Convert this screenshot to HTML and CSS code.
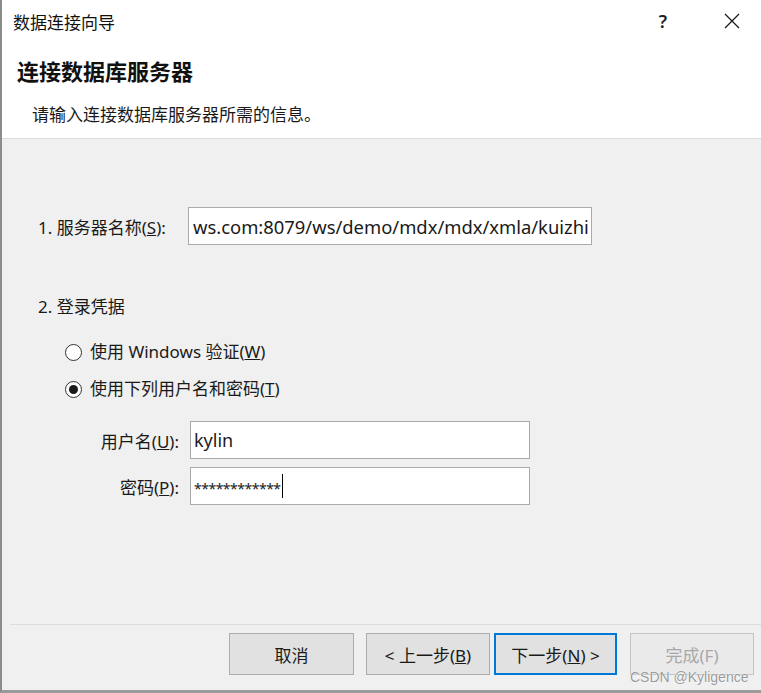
FILE: index.html
```html
<!DOCTYPE html>
<html lang="zh-CN">
<head>
<meta charset="utf-8">
<title>数据连接向导</title>
<link rel="stylesheet" href="styles.css">
</head>
<body>
<div class="window">
  <div class="top">
    <div class="titlebar">
      <span class="title">数据连接向导</span>
      <div class="controls">
        <span class="help">?</span>
        <svg class="close" width="16" height="16" viewBox="0 0 16 16"><path d="M1 1 L15 15 M15 1 L1 15" stroke="#1a1a1a" stroke-width="1.3" fill="none"/></svg>
      </div>
    </div>
    <div class="header">
      <h1 class="heading">连接数据库服务器</h1>
      <p class="sub">请输入连接数据库服务器所需的信息。</p>
    </div>
  </div>
  <div class="content">
    <div class="server-row">
      <span class="server-label">1. 服务器名称(<u>S</u>):</span>
      <div class="textbox server-box">ws.com:8079/ws/demo/mdx/mdx/xmla/kuizhi</div>
    </div>
    <div class="section-title">2. 登录凭据</div>
    <label class="radio-row first">
      <span class="radio"></span>
      <span>使用 Windows 验证(<u>W</u>)</span>
    </label>
    <label class="radio-row second">
      <span class="radio checked"></span>
      <span>使用下列用户名和密码(<u>T</u>)</span>
    </label>
    <div class="cred-grid">
      <span class="cred-label">用户名(<u>U</u>):</span>
      <div class="textbox cred-box">kylin</div>
      <span class="cred-label">密码(<u>P</u>):</span>
      <div class="textbox cred-box"><span class="stars">************</span><span class="caret"></span></div>
    </div>
  </div>
  <div class="footer">
    <div class="buttons">
      <button class="btn cancel">取消</button>
      <button class="btn back">&lt; 上一步(<u>B</u>)</button>
      <button class="btn next">下一步(<u>N</u>) &gt;</button>
      <button class="btn finish" disabled>完成(F)</button>
    </div>
    <span class="watermark">CSDN @Kyligence</span>
  </div>
</div>
</body>
</html>
```
FILE: styles.css
```css
* { box-sizing: border-box; }
html, body { margin: 0; padding: 0; }
body {
  background: #f0f0f0;
  font-family: "Noto Sans", "Noto Sans CJK SC", sans-serif;
  font-size: 17px;
  color: #1a1a1a;
}
.window {
  width: 761px;
  height: 693px;
  border-left: 2px solid #8c8c8c;
  border-bottom: 3px solid #9a9a9a;
  display: flex;
  flex-direction: column;
  background: #f0f0f0;
}
.top {
  background: #fff;
  height: 139px;
  border-bottom: 1px solid #dcdcdc;
}
.titlebar {
  height: 42px;
  display: flex;
  align-items: center;
  justify-content: space-between;
  padding-left: 11px;
}
.title {
  font-size: 17px;
  color: #111;
}
.controls {
  display: flex;
  align-items: center;
}
.help {
  font-size: 18px;
  font-weight: 600;
  margin-right: 57px;
  color: #222;
}
.close {
  margin-right: 21px;
}
.header {
  padding-top: 15px;
}
.heading {
  margin: 0 0 0 15px;
  font-size: 22px;
  line-height: 28px;
  font-weight: bold;
  color: #111;
}
.sub {
  margin: 18px 0 0 30px;
  font-size: 17px;
  line-height: 24px;
}
.content {
  flex: 1;
  padding-left: 36px;
  padding-top: 68px;
}
.server-row {
  display: flex;
  align-items: center;
}
.server-label {
  width: 150px;
}
.textbox {
  background: #fff;
  border: 1px solid #aaaaaa;
  height: 38px;
  display: flex;
  align-items: center;
  padding-left: 4px;
  overflow: hidden;
  white-space: nowrap;
}
.server-box {
  width: 404px;
  font-size: 18.4px;
}
.section-title {
  margin-top: 50px;
  line-height: 24px;
}
.radio-row {
  display: flex;
  align-items: center;
  line-height: 24px;
  padding-left: 27px;
}
.radio-row.first { margin-top: 21px; }
.radio-row.second { margin-top: 13px; }
.radio {
  width: 17px;
  height: 17px;
  border: 1px solid #333;
  border-radius: 50%;
  background: #fff;
  margin-right: 8px;
  display: flex;
  align-items: center;
  justify-content: center;
}
.radio.checked::after {
  content: "";
  width: 9px;
  height: 9px;
  border-radius: 50%;
  background: #1a1a1a;
}
.cred-grid {
  margin-top: 20px;
  display: grid;
  grid-template-columns: 141px 340px;
  column-gap: 11px;
  row-gap: 8px;
  align-items: center;
}
.cred-label {
  text-align: right;
}
.cred-box {
  width: 340px;
  font-size: 18px;
  padding-left: 3px;
}
.stars {
  font-size: 14px;
  letter-spacing: -0.5px;
  position: relative;
  top: 2px;
}
.caret {
  display: inline-block;
  width: 1.5px;
  height: 24px;
  background: #000;
  margin-left: 1px;
}
.footer {
  height: 66px;
  position: relative;
}
.buttons {
  margin-left: 8px;
  border-top: 1px solid #dcdcdc;
  height: 100%;
  display: flex;
  align-items: flex-start;
  padding-top: 8px;
  padding-left: 219px;
}
.btn {
  font-family: "Noto Sans", "Noto Sans CJK SC", sans-serif;
  font-size: 17px;
  color: #1a1a1a;
  height: 42px;
  background: #e1e1e1;
  border: 1px solid #adadad;
  padding: 0;
  margin: 0;
}
.cancel { width: 125px; }
.back { width: 124px; margin-left: 12px; }
.next { width: 123px; margin-left: 4px; border: 2px solid #0078d7; }
.finish {
  width: 124px;
  margin-left: 13px;
  background: #eaeaea;
  border-color: #c4c4c4;
  color: #a8a8a8;
}
.watermark {
  position: absolute;
  left: 628px;
  top: 45px;
  font-family: "Liberation Sans", sans-serif;
  font-size: 14px;
  color: #9a9a9a;
  text-shadow: 0 0 1px #fff, 0 0 1px #fff;
}
```
